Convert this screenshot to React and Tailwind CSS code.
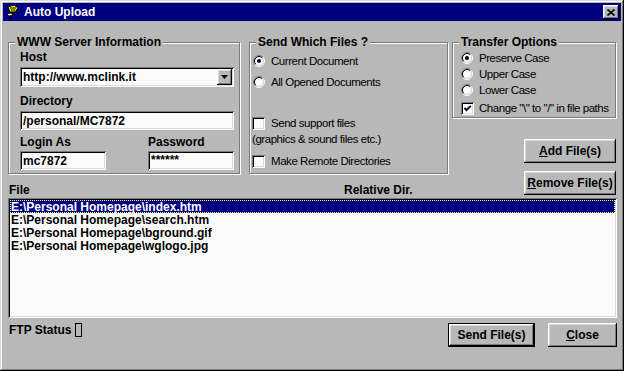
import React from 'react';

const raised = 'bg-[#b8b8b8] shadow-[inset_-1px_-1px_0_#000,inset_1px_1px_0_#fff,inset_-2px_-2px_0_#7b7b7b,inset_2px_2px_0_#dadada]';
const sunken = 'bg-[#fbfbfb] shadow-[inset_1px_1px_0_#7b7b7b,inset_-1px_-1px_0_#fff,inset_2px_2px_0_#000,inset_-2px_-2px_0_#dadada]';
const etched = 'border border-[#7b7b7b] shadow-[inset_1px_1px_0_#fff,1px_1px_0_#fff]';
const label = 'text-[12px] font-bold leading-[14px]';
const small = 'text-[11.5px] tracking-[-0.45px] leading-[16px]';

function Group({ title, className, children }) {
    return (
        <div className={`relative ${etched} ${className}`}>
            <span className={`absolute -top-[8px] left-[6px] bg-[#b8b8b8] px-[2px] ${label}`}>{title}</span>
            {children}
        </div>
    );
}

function Radio({ checked }) {
    return (
        <svg width="12" height="12" viewBox="0 0 12 12" className="shrink-0">
            <circle cx="6" cy="6" r="4.5" fill="#fbfbfb" />
            <path d="M2.11 9.89 A5.5 5.5 0 0 1 9.89 2.11" stroke="#7b7b7b" fill="none" />
            <path d="M9.89 2.11 A5.5 5.5 0 0 1 2.11 9.89" stroke="#fff" fill="none" />
            <path d="M2.82 9.18 A4.5 4.5 0 0 1 9.18 2.82" stroke="#000" fill="none" />
            <path d="M9.18 2.82 A4.5 4.5 0 0 1 2.82 9.18" stroke="#dadada" fill="none" />
            {checked && <circle cx="6" cy="6" r="2" fill="#000" />}
        </svg>
    );
}

function Check({ checked }) {
    return (
        <span className={`w-[13px] h-[13px] shrink-0 flex items-center justify-center ${sunken}`}>
            {checked && (
                <svg width="9" height="9" viewBox="0 0 9 9">
                    <polyline points="1.5,4 3.5,6.2 7.8,1.8" stroke="#000" strokeWidth="1.9" fill="none" />
                </svg>
            )}
        </span>
    );
}

function Field({ children, className }) {
    return (
        <div className={`h-[19px] flex items-center pl-[3px] ${label} ${sunken} ${className}`}>{children}</div>
    );
}

function Button({ children, className, isDefault }) {
    if (isDefault) {
        return (
            <div className={`border border-black ${className}`}>
                <div className={`w-full h-full flex items-center justify-center ${label} ${raised}`}>{children}</div>
            </div>
        );
    }
    return (
        <div className={`flex items-center justify-center ${label} ${raised} ${className}`}>{children}</div>
    );
}

function U({ children }) {
    return <span className="underline underline-offset-[1px]">{children}</span>;
}

export default function App() {
    const files = [
        'E:\\Personal Homepage\\index.htm',
        'E:\\Personal Homepage\\search.htm',
        'E:\\Personal Homepage\\bground.gif',
        'E:\\Personal Homepage\\wglogo.jpg',
    ];

    return (
        <div className="w-[624px] h-[371px] bg-[#b8b8b8] p-[3px] text-black font-['Liberation_Sans',Arial,sans-serif] shadow-[inset_-1px_-1px_0_#000,inset_1px_1px_0_#dadada,inset_-2px_-2px_0_#7b7b7b,inset_2px_2px_0_#fff]">
            {/* title bar */}
            <div className="h-[18px] bg-[#000080] flex items-center pl-[2px] pr-[2px]">
                <svg width="16" height="16" viewBox="0 0 16 16" className="shrink-0">
                    <path d="M3 3 L9 1 L13 4 L10 8 L5 8 Z" fill="#ffff00" stroke="#000" strokeWidth="1" />
                    <path d="M5 4 L11 4 M6 6 L10 6" stroke="#000" strokeWidth="1" />
                    <path d="M7 8 L5 15 M9 8 L10 12" stroke="#000" strokeWidth="1.2" />
                    <path d="M2 10 L6 9 L8 11 L4 12 Z" fill="#fff" stroke="#000" strokeWidth="0.8" />
                </svg>
                <span className={`ml-[3px] text-white ${label}`}>Auto Upload</span>
                <div className={`ml-auto w-[16px] h-[14px] flex items-center justify-center ${raised}`}>
                    <svg width="8" height="7" viewBox="0 0 8 7">
                        <path d="M0.5 0.5 L7.5 6.5 M7.5 0.5 L0.5 6.5" stroke="#000" strokeWidth="1.6" />
                    </svg>
                </div>
            </div>

            <div className="pl-[5px] pr-[4px] pt-[21px]">
                <div className="flex items-start h-[155px]">
                    {/* left side */}
                    <div className="w-[440px]">
                        <div className="flex">
                            <Group title="WWW Server Information" className="w-[232px] h-[132px]">
                                <div className="pl-[11px] pr-[5px] pt-[7px]">
                                    <div className={label}>Host</div>
                                    <div className={`mt-[3px] h-[20px] flex items-center pl-[3px] pr-[2px] ${sunken}`}>
                                        <span className={`flex-1 ${label}`}>http://www.mclink.it</span>
                                        <div className={`w-[15px] h-[16px] flex items-center justify-center ${raised}`}>
                                            <svg width="7" height="4" viewBox="0 0 7 4">
                                                <path d="M0 0 L7 0 L3.5 4 Z" fill="#000" />
                                            </svg>
                                        </div>
                                    </div>
                                    <div className={`mt-[7px] ${label}`}>Directory</div>
                                    <Field className="mt-[3px]">/personal/MC7872</Field>
                                    <div className="flex mt-[5px]">
                                        <div className="w-[86px]">
                                            <div className={label}>Login As</div>
                                            <Field className="mt-[2px]">mc7872</Field>
                                        </div>
                                        <div className="w-[86px] ml-[42px]">
                                            <div className={label}>Password</div>
                                            <Field className="mt-[2px] items-start pt-[2px]">******</Field>
                                        </div>
                                    </div>
                                </div>
                            </Group>

                            <Group title="Send Which Files ?" className="ml-[9px] w-[199px] h-[132px]">
                                <div className="pl-[2px] pt-[10px]">
                                    <div className={`flex items-center h-[16px] ml-[1px] ${small}`}>
                                        <Radio checked />
                                        <span className="ml-[6px]">Current Document</span>
                                    </div>
                                    <div className={`flex items-center h-[16px] mt-[5px] ml-[1px] ${small}`}>
                                        <Radio />
                                        <span className="ml-[6px]">All Opened Documents</span>
                                    </div>
                                    <div className={`flex items-center h-[16px] mt-[25px] ${small}`}>
                                        <Check />
                                        <span className="ml-[6px]">Send support files</span>
                                    </div>
                                    <div className={`${small} leading-[14px]`}>(graphics &amp; sound files etc.)</div>
                                    <div className={`flex items-center h-[16px] mt-[6px] ${small}`}>
                                        <Check />
                                        <span className="ml-[6px]">Make Remote Directories</span>
                                    </div>
                                </div>
                            </Group>
                        </div>
                        <div className={`flex mt-[9px] ${label}`}>
                            <span className="w-[336px] pl-[1px]">File</span>
                            <span>Relative Dir.</span>
                        </div>
                    </div>

                    {/* right side */}
                    <div className="ml-[4px] w-[164px] flex flex-col items-end">
                        <Group title="Transfer Options" className="w-[164px] h-[76px]">
                            <div className="pl-[8px] pt-[7px]">
                                <div className={`flex items-center h-[16px] ${small}`}>
                                    <Radio checked />
                                    <span className="ml-[6px]">Preserve Case</span>
                                </div>
                                <div className={`flex items-center h-[16px] ${small}`}>
                                    <Radio />
                                    <span className="ml-[6px]">Upper Case</span>
                                </div>
                                <div className={`flex items-center h-[16px] ${small}`}>
                                    <Radio />
                                    <span className="ml-[6px]">Lower Case</span>
                                </div>
                                <div className={`flex items-center h-[14px] mt-[3px] ${small}`}>
                                    <Check checked />
                                    <span className="ml-[5px]">Change "\" to "/" in file paths</span>
                                </div>
                            </div>
                        </Group>
                        <Button className="mt-[21px] w-[92px] h-[24px]"><U>A</U>dd File(s)</Button>
                        <Button className="mt-[8px] w-[92px] h-[24px]"><U>R</U>emove File(s)</Button>
                    </div>
                </div>

                {/* file list */}
                <div className={`mt-[1px] h-[120px] p-[2px] ${sunken}`}>
                    {files.map((f, i) => (
                        <div
                            key={f}
                            className={`h-[13px] pl-[1px] ${label} leading-[13px] ${i === 0 ? 'bg-[#000080] text-white outline-1 outline-dotted -outline-offset-1 outline-[#ffff80]' : ''}`}
                        >
                            {f}
                        </div>
                    ))}
                </div>

                {/* bottom row */}
                <div className="flex items-start mt-[5px]">
                    <span className={`ml-[1px] ${label}`}>FTP Status</span>
                    <span className="ml-[4px] w-[7px] h-[14px] border border-black" />
                    <Button isDefault className="ml-auto w-[87px] h-[24px]">Send File(s)</Button>
                    <Button className="ml-[13px] w-[69px] h-[24px]"><U>C</U>lose</Button>
                </div>
            </div>
        </div>
    );
}
